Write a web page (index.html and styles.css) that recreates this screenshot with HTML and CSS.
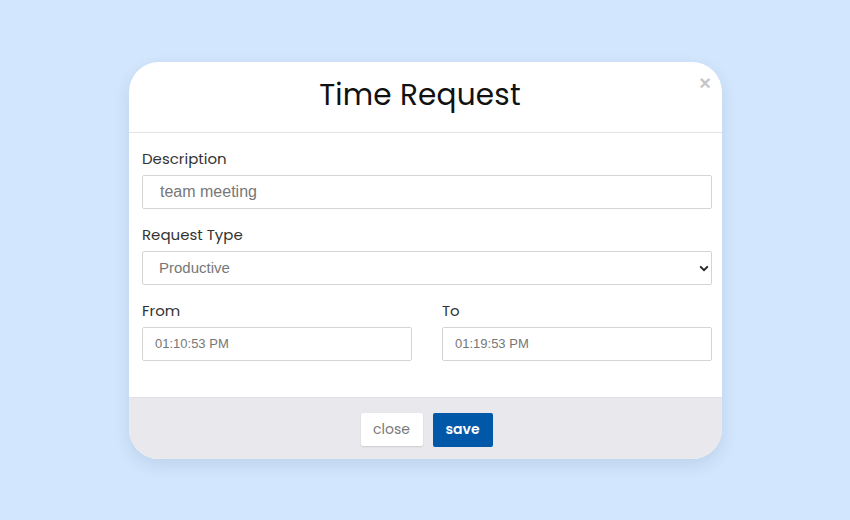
FILE: index.html
```html
<!DOCTYPE html>
<html lang="en">
<head>
<meta charset="utf-8">
<title>Time Request</title>
<link rel="stylesheet" href="styles.css">
</head>
<body>
<div class="page">
  <div class="modal">
    <div class="modal-header">
      <h1 class="modal-title">Time Request</h1>
      <span class="modal-close">&times;</span>
    </div>
    <div class="modal-body">
      <div class="group">
        <label class="label">Description</label>
        <input class="input input-desc" type="text" value="team meeting">
      </div>
      <div class="group">
        <label class="label">Request Type</label>
        <div class="select-wrap">
          <select class="input select">
            <option>Productive</option>
          </select>
          <svg class="chevron" width="10" height="7" viewBox="0 0 10 7"><path d="M1.2 1.4 L5 5.2 L8.8 1.4" fill="none" stroke="#222" stroke-width="1.9"/></svg>
        </div>
      </div>
      <div class="row">
        <div class="group col">
          <label class="label">From</label>
          <input class="input input-time" type="text" value="01:10:53 PM">
        </div>
        <div class="group col">
          <label class="label">To</label>
          <input class="input input-time" type="text" value="01:19:53 PM">
        </div>
      </div>
    </div>
    <div class="modal-footer">
      <button class="btn btn-close">close</button>
      <button class="btn btn-save">save</button>
    </div>
  </div>
</div>
</body>
</html>
```
FILE: styles.css
```css
* { box-sizing: border-box; }
html, body { margin: 0; padding: 0; }
body {
  background: #d2e6fd;
  font-family: "Poppins", "Inter", "Open Sans", sans-serif;
}
.page {
  height: 520px;
  display: flex;
  align-items: center;
  justify-content: center;
}
.modal {
  width: 593px;
  background: #fff;
  border-radius: 30px;
  overflow: hidden;
  box-shadow: 0 6px 16px rgba(40, 70, 110, 0.12);
  margin-left: 1px;
}
.modal-header {
  position: relative;
  height: 71px;
  border-bottom: 1px solid #e3e3e3;
  display: flex;
  align-items: center;
  justify-content: center;
}
.modal-title {
  margin: 0 11px 4px 0;
  font-weight: 400;
  font-size: 29.5px;
  color: #111;
  letter-spacing: 0.2px;
}
.modal-close {
  position: absolute;
  right: 11px;
  top: 10px;
  font-size: 20px;
  font-weight: 700;
  color: #c6c6c6;
  font-family: "Liberation Sans", sans-serif;
}
.modal-body {
  padding: 14px 10px 36px 13px;
}
.group {
  margin-bottom: 14px;
}
.label {
  display: block;
  font-size: 15px;
  line-height: 24px;
  color: #333;
  margin-bottom: 4px;
}
.input {
  display: block;
  width: 100%;
  height: 34px;
  border: 1px solid #d4d4d4;
  border-radius: 2px;
  background: #fff;
  color: #777;
  font-family: "Liberation Sans", Arial, sans-serif;
  outline: none;
}
.input-desc {
  font-size: 16px;
  padding: 0 17px;
}
.select-wrap {
  position: relative;
}
.select {
  appearance: none;
  -webkit-appearance: none;
  font-size: 15px;
  padding: 0 16px;
}
.chevron {
  position: absolute;
  right: 3px;
  top: 14px;
}
.input-time {
  font-size: 13px;
  padding: 0 12px;
}
.row {
  display: flex;
  gap: 30px;
}
.col {
  flex: 1;
  margin-bottom: 0;
}
.modal-footer {
  height: 62px;
  background: #e9e8ed;
  border-top: 1px solid #e0e0e6;
  display: flex;
  align-items: center;
  justify-content: center;
  gap: 10px;
  padding: 3px 0 0 2px;
}
.btn {
  font-family: "Poppins", "Inter", "Open Sans", sans-serif;
  font-size: 14px;
  border: none;
  border-radius: 2px;
  cursor: pointer;
}
.btn-close {
  width: 62px;
  height: 33px;
  background: #fff;
  color: #7a7a7a;
  font-weight: 400;
  box-shadow: 0 1px 2px rgba(0, 0, 0, 0.12);
}
.btn-save {
  width: 60px;
  height: 34px;
  background: #0157a8;
  color: #fff;
  font-weight: 600;
}
```
